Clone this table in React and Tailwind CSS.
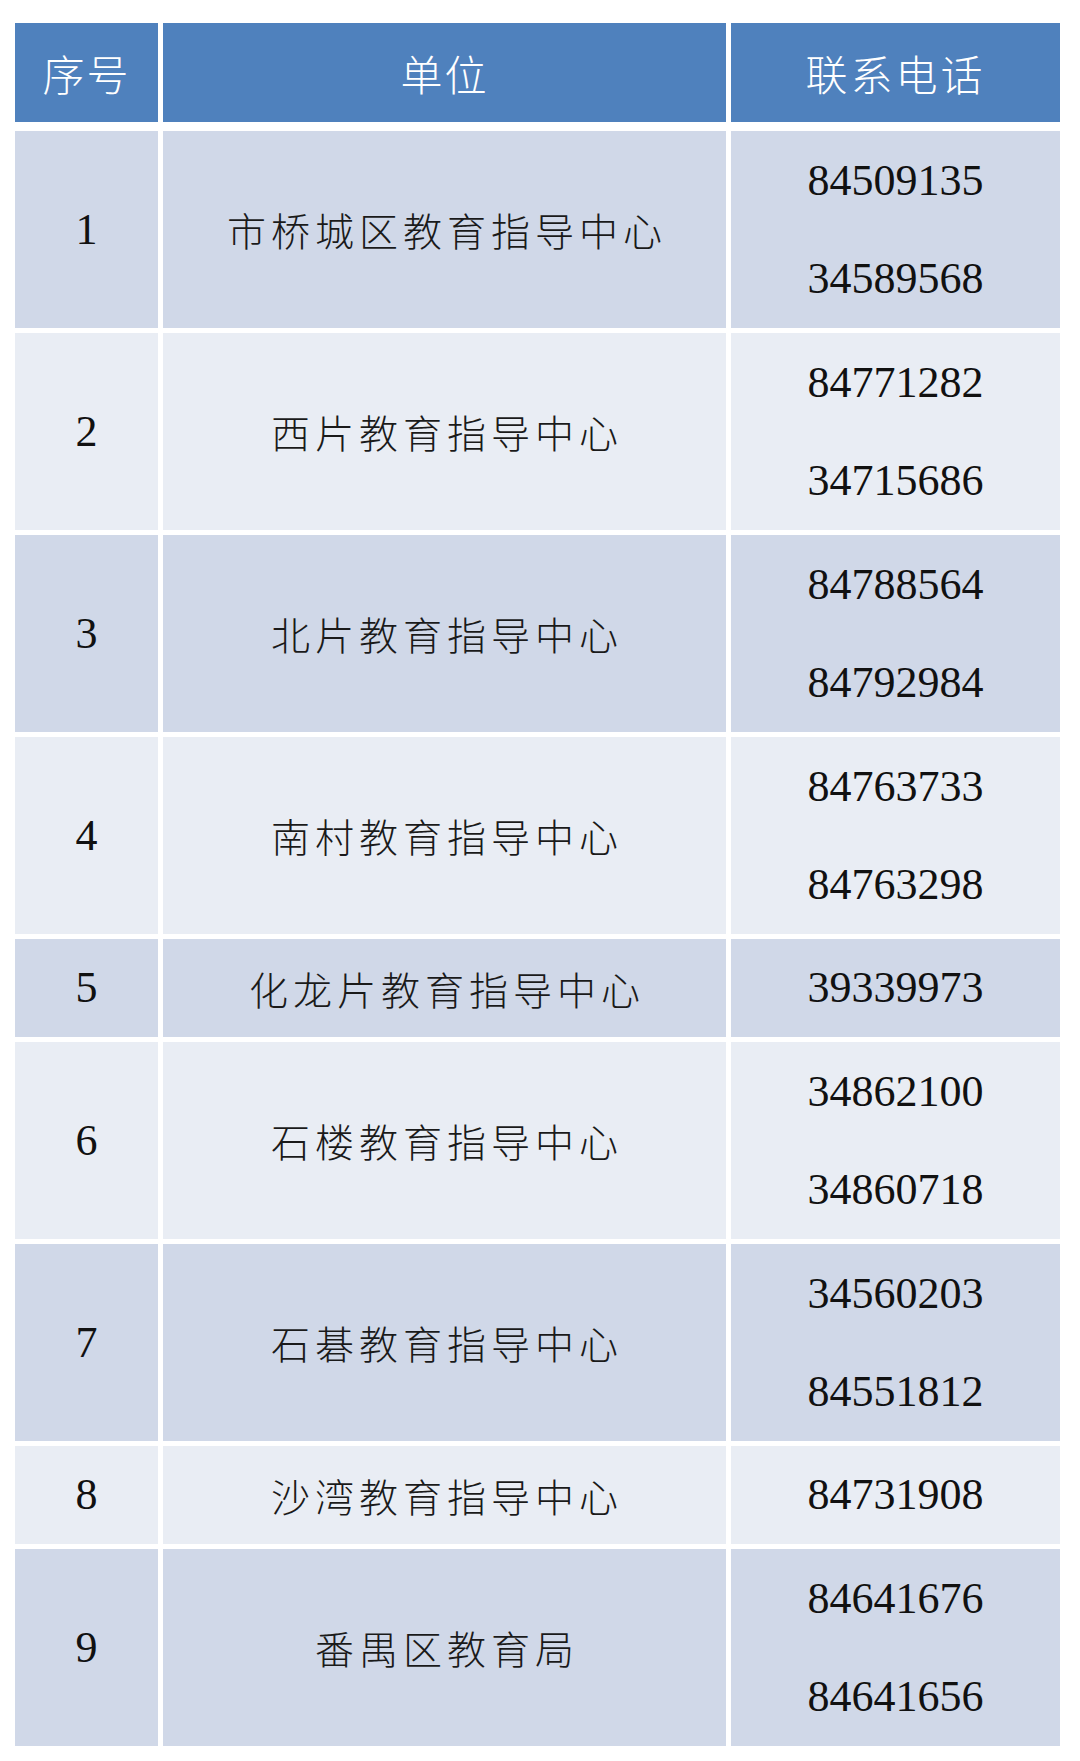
import React from "react";

const rows = [
  { n: "1", name: "市桥城区教育指导中心", tel: ["84509135", "34589568"] },
  { n: "2", name: "西片教育指导中心", tel: ["84771282", "34715686"] },
  { n: "3", name: "北片教育指导中心", tel: ["84788564", "84792984"] },
  { n: "4", name: "南村教育指导中心", tel: ["84763733", "84763298"] },
  { n: "5", name: "化龙片教育指导中心", tel: ["39339973"] },
  { n: "6", name: "石楼教育指导中心", tel: ["34862100", "34860718"] },
  { n: "7", name: "石碁教育指导中心", tel: ["34560203", "84551812"] },
  { n: "8", name: "沙湾教育指导中心", tel: ["84731908"] },
  { n: "9", name: "番禺区教育局", tel: ["84641676", "84641656"] },
];

const headCls =
  "h-[99px] bg-[#4f81bd] flex items-center justify-center text-white text-[42px] font-light font-['Noto_Sans_CJK_SC',sans-serif]";
const numCls =
  "flex items-center justify-center text-[44px] text-[#111] font-['Liberation_Serif',serif]";

export default function App() {
  return (
    <div className="w-[1080px] h-[1761px] bg-white pt-[23px] pl-[15px]">
      <div className="w-[1045px] grid grid-cols-[143px_563px_329px] gap-x-[5px]">
        <div className={`${headCls} tracking-[2px]`}>序号</div>
        <div className={`${headCls} tracking-[2px]`}>单位</div>
        <div className={`${headCls} tracking-[3px]`}>联系电话</div>
      </div>
      <div className="w-[1045px] mt-[9px] flex flex-col gap-y-[5px]">
        {rows.map((r, i) => {
          const bg = i % 2 === 0 ? "bg-[#d0d8e8]" : "bg-[#e9edf4]";
          const h = r.tel.length === 2 ? "h-[197px]" : "h-[98px]";
          return (
            <div key={r.n} className={`grid grid-cols-[143px_563px_329px] gap-x-[5px] ${h}`}>
              <div className={`${bg} ${numCls}`}>{r.n}</div>
              <div
                className={`${bg} flex items-center justify-center text-[39px] font-light tracking-[5px] pl-[5px] text-[#1a1a1a] font-['Noto_Sans_CJK_SC',sans-serif]`}
              >
                {r.name}
              </div>
              <div className={`${bg} flex flex-col justify-center`}>
                {r.tel.map((t) => (
                  <div key={t} className={`h-[98px] ${numCls}`}>
                    {t}
                  </div>
                ))}
              </div>
            </div>
          );
        })}
      </div>
    </div>
  );
}
